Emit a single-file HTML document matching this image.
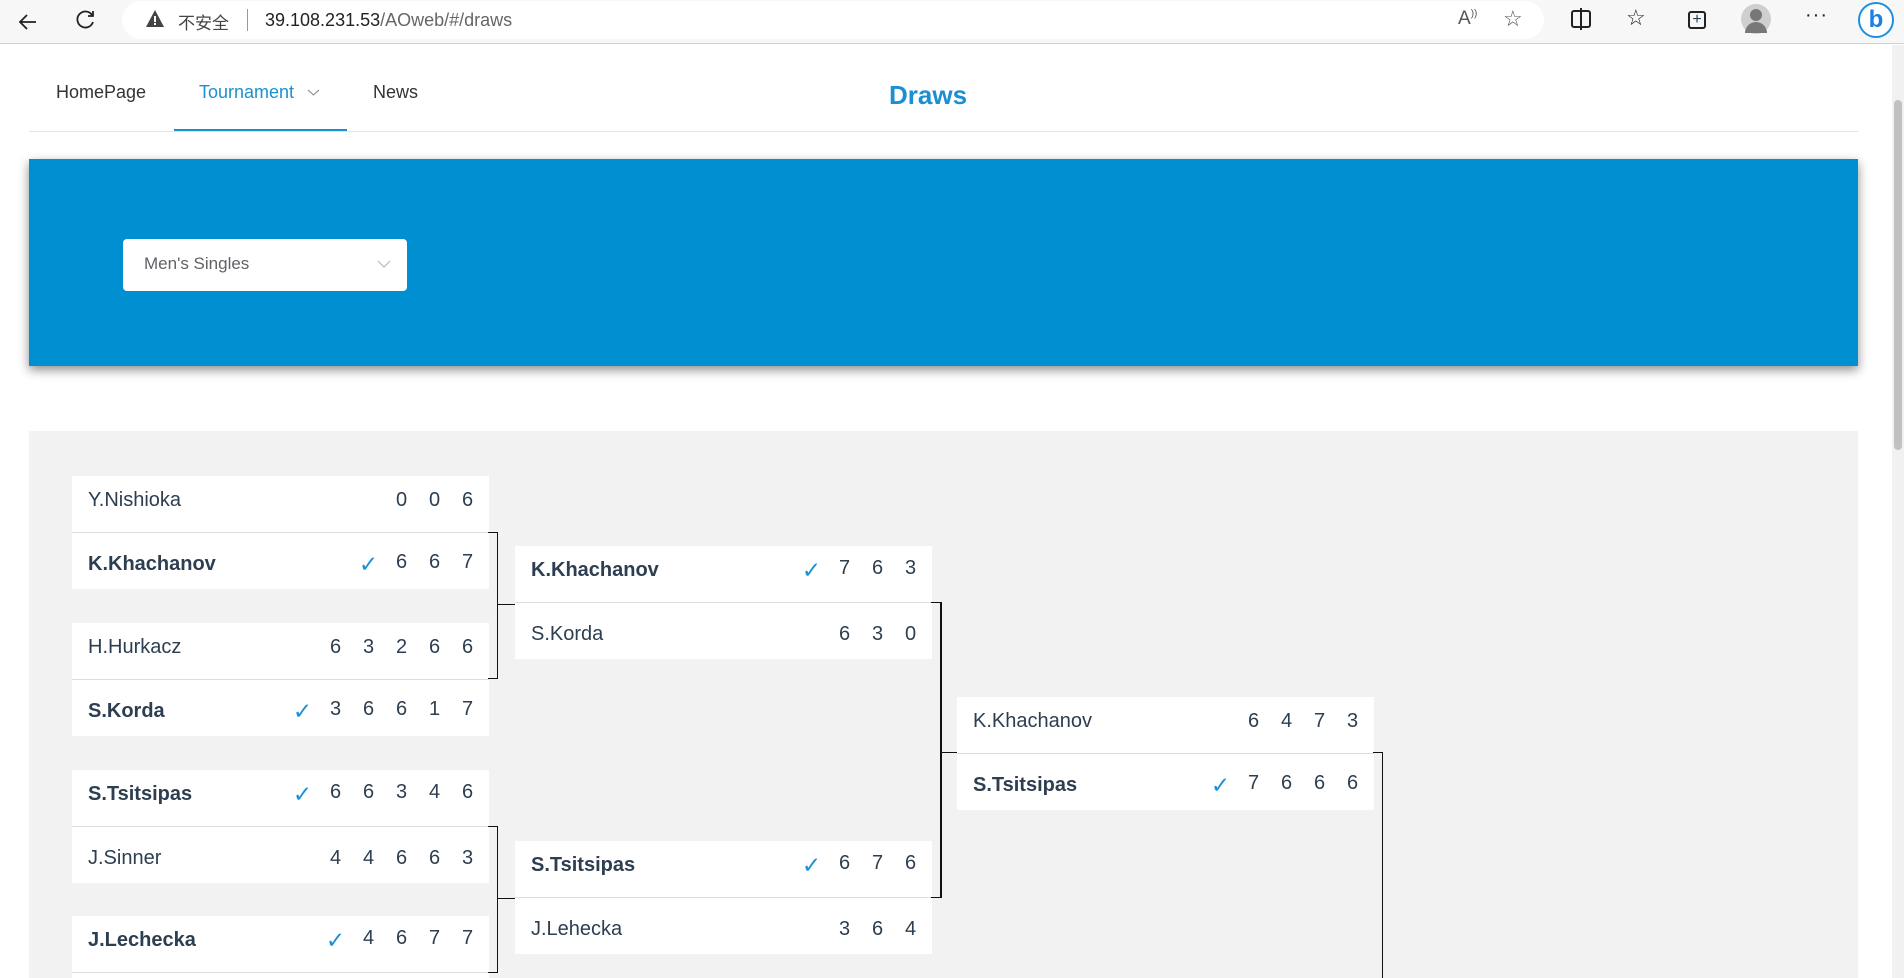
<!DOCTYPE html>
<html><head><meta charset="utf-8"><style>
*{margin:0;padding:0;box-sizing:border-box}
html,body{width:1904px;height:978px;overflow:hidden;background:#fff}
body{font-family:"Liberation Sans",Arial,sans-serif;color:#2c3e50}
#wrap{position:relative;width:1904px;height:978px;overflow:hidden}
.abs{position:absolute}
.bar{left:0;top:0;width:1904px;height:44px;background:#f7f7f7;border-bottom:1px solid #d0d0d0}
.pill{left:122px;top:1px;width:1422px;height:38px;background:#fff;border-radius:19px}
.url{left:265px;top:10px;font-size:18px;color:#222}
.nav{font-size:18px;color:#333;top:82px}
.card{position:absolute;width:417px;background:#fff}
.row{height:56px;display:flex;align-items:center;padding:0 5px 8px 16px;font-size:20px;position:relative}
.row+.row{border-top:1px solid #ddd;height:57px;padding:6px 5px 0 16px}
.row .n{flex:1}
.row b{font-weight:bold}
.sc{display:flex}
.sc span{width:33px;text-align:center}
.sc .ck{color:#1e90d6;font-size:23px}
.ln{position:absolute;background:#111}
</style></head><body><div id="wrap">
<div class="abs bar"></div>
<div class="abs pill"></div>
<svg class="abs" style="left:16px;top:10px" width="24" height="24" viewBox="0 0 24 24"><path d="M20 12H5M11 5l-7 7 7 7" stroke="#222" stroke-width="1.8" fill="none"/></svg>
<svg class="abs" style="left:74px;top:8px" width="24" height="24" viewBox="0 0 24 24"><path d="M18 7a8 8 0 1 0 1 7" stroke="#222" stroke-width="1.8" fill="none"/><path d="M19 3v5h-5" stroke="#222" stroke-width="1.8" fill="none"/></svg>
<svg class="abs" style="left:145px;top:9px" width="20" height="20" viewBox="0 0 20 20"><path d="M10 1L19 18H1Z" fill="#444"/><rect x="9" y="7" width="2" height="6" fill="#fff"/><rect x="9" y="14" width="2" height="2" fill="#fff"/></svg>
<div class="abs" style="left:178px;top:9px;font-size:17px;color:#444;font-family:'Liberation Sans','Noto Sans CJK SC',sans-serif">不安全</div>
<div class="abs" style="left:247px;top:9px;width:1px;height:22px;background:#999"></div>
<div class="abs url">39.108.231.53<span style="color:#666">/AOweb/#/draws</span></div>
<div class="abs" style="left:1458px;top:8px;font-size:19px;color:#555">A<sup style="font-size:10px">))</sup></div>
<div class="abs" style="left:1503px;top:6px;font-size:22px;color:#555">☆</div>
<div class="abs" style="left:1571px;top:10px;width:20px;height:18px;border:2px solid #222;border-radius:3px"></div>
<div class="abs" style="left:1580px;top:8px;width:2px;height:22px;background:#222"></div>
<div class="abs" style="left:1626px;top:5px;font-size:22px;color:#222">☆</div>
<div class="abs" style="left:1688px;top:11px;width:18px;height:18px;border:2px solid #222;border-radius:3px;font-size:16px;line-height:13px;text-align:center">+</div>
<div class="abs" style="left:1741px;top:4px;width:30px;height:30px;border-radius:50%;background:#cfcfcf"></div>
<div class="abs" style="left:1750px;top:9px;width:12px;height:12px;border-radius:50%;background:#777"></div>
<div class="abs" style="left:1745px;top:22px;width:22px;height:11px;border-radius:11px 11px 0 0;background:#777"></div>
<div class="abs" style="left:1805px;top:4px;font-size:20px;color:#222;letter-spacing:1px">···</div>
<div class="abs" style="left:1858px;top:2px;width:36px;height:36px;border-radius:50%;border:2px solid #1e90e0;background:#fff;color:#1e7fe0;font-weight:bold;font-size:24px;text-align:center;line-height:32px">b</div>
<div class="abs" style="left:1892px;top:45px;width:12px;height:933px;background:#f1f1f1"></div>
<div class="abs" style="left:1894px;top:100px;width:8px;height:350px;background:#c1c1c1;border-radius:4px"></div>

<div class="abs nav" style="left:56px">HomePage</div>
<div class="abs nav" style="left:199px;color:#1a8fd1">Tournament</div>
<svg class="abs" style="left:307px;top:88px" width="13" height="9" viewBox="0 0 13 9"><path d="M1 2l5.5 5 5.5-5" stroke="#999" stroke-width="1.2" fill="none"/></svg>
<div class="abs" style="left:174px;top:129px;width:173px;height:2px;background:#1a8fd1"></div>
<div class="abs nav" style="left:373px">News</div>
<div class="abs" style="left:889px;top:80px;font-size:26px;font-weight:bold;color:#1a8fd1">Draws</div>
<div class="abs" style="left:29px;top:131px;width:1829px;height:1px;background:#e4e4e4"></div>

<div class="abs" style="left:29px;top:159px;width:1829px;height:207px;background:#0090d2;box-shadow:0 4px 10px rgba(0,0,0,.45)"></div>
<div class="abs" style="left:123px;top:239px;width:284px;height:52px;background:#fff;border-radius:4px"></div>
<div class="abs" style="left:144px;top:254px;font-size:17px;color:#606266">Men's Singles</div>
<svg class="abs" style="left:377px;top:259px" width="14" height="10" viewBox="0 0 14 10"><path d="M1 2l6 6 6-6" stroke="#bbb" stroke-width="1.2" fill="none"/></svg>

<div class="abs" style="left:29px;top:431px;width:1829px;height:547px;background:#f2f2f2"></div>

<div class="card" style="left:72px;top:476px">
<div class="row"><span class="n">Y.Nishioka</span><div class="sc"><span>0</span><span>0</span><span>6</span></div></div>
<div class="row"><b class="n">K.Khachanov</b><div class="sc"><span class="ck">✓</span><span>6</span><span>6</span><span>7</span></div></div>
</div>
<div class="card" style="left:72px;top:623px">
<div class="row"><span class="n">H.Hurkacz</span><div class="sc"><span>6</span><span>3</span><span>2</span><span>6</span><span>6</span></div></div>
<div class="row"><b class="n">S.Korda</b><div class="sc"><span class="ck">✓</span><span>3</span><span>6</span><span>6</span><span>1</span><span>7</span></div></div>
</div>
<div class="card" style="left:72px;top:770px">
<div class="row"><b class="n">S.Tsitsipas</b><div class="sc"><span class="ck">✓</span><span>6</span><span>6</span><span>3</span><span>4</span><span>6</span></div></div>
<div class="row"><span class="n">J.Sinner</span><div class="sc"><span>4</span><span>4</span><span>6</span><span>6</span><span>3</span></div></div>
</div>
<div class="card" style="left:72px;top:916px;height:62px;overflow:hidden">
<div class="row"><b class="n">J.Lechecka</b><div class="sc"><span class="ck">✓</span><span>4</span><span>6</span><span>7</span><span>7</span></div></div>
<div style="height:1px;background:#ddd"></div>
</div>

<div class="card" style="left:515px;top:546px">
<div class="row"><b class="n">K.Khachanov</b><div class="sc"><span class="ck">✓</span><span>7</span><span>6</span><span>3</span></div></div>
<div class="row"><span class="n">S.Korda</span><div class="sc"><span>6</span><span>3</span><span>0</span></div></div>
</div>
<div class="card" style="left:515px;top:841px">
<div class="row"><b class="n">S.Tsitsipas</b><div class="sc"><span class="ck">✓</span><span>6</span><span>7</span><span>6</span></div></div>
<div class="row"><span class="n">J.Lehecka</span><div class="sc"><span>3</span><span>6</span><span>4</span></div></div>
</div>

<div class="card" style="left:957px;top:697px">
<div class="row"><span class="n">K.Khachanov</span><div class="sc"><span>6</span><span>4</span><span>7</span><span>3</span></div></div>
<div class="row"><b class="n">S.Tsitsipas</b><div class="sc"><span class="ck">✓</span><span>7</span><span>6</span><span>6</span><span>6</span></div></div>
</div>

<div class="ln" style="left:488px;top:532px;width:10px;height:1px"></div>
<div class="ln" style="left:497px;top:532px;width:1px;height:147px"></div>
<div class="ln" style="left:488px;top:678px;width:10px;height:1px"></div>
<div class="ln" style="left:497px;top:604px;width:18px;height:1px"></div>

<div class="ln" style="left:488px;top:826px;width:10px;height:1px"></div>
<div class="ln" style="left:497px;top:826px;width:1px;height:147px"></div>
<div class="ln" style="left:488px;top:972px;width:10px;height:1px"></div>
<div class="ln" style="left:497px;top:898px;width:18px;height:1px"></div>

<div class="ln" style="left:931px;top:602px;width:10px;height:1px"></div>
<div class="ln" style="left:940px;top:602px;width:2px;height:296px"></div>
<div class="ln" style="left:931px;top:897px;width:10px;height:1px"></div>
<div class="ln" style="left:940px;top:752px;width:17px;height:1px"></div>

<div class="ln" style="left:1373px;top:752px;width:10px;height:1px"></div>
<div class="ln" style="left:1382px;top:752px;width:1px;height:226px"></div>
</div></body></html>
